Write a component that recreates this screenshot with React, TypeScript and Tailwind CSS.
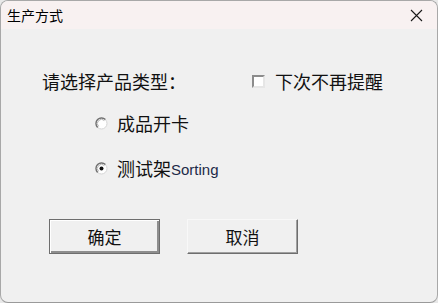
const font = { fontFamily: '"Noto Sans CJK SC", "Noto Sans", sans-serif' }

function Radio({ checked }: { checked?: boolean }) {
  return (
    <svg width="13" height="13" viewBox="0 0 13 13" className="shrink-0">
      <circle cx="6.5" cy="6.5" r="5.5" fill="#ffffff" stroke="#d4d4d4" strokeWidth="1" />
      <path d="M2.6 10.4 A5.5 5.5 0 0 1 10.4 2.6" fill="none" stroke="#707070" strokeWidth="1.4" />
      <path d="M3.6 9.4 A4.1 4.1 0 0 1 9.4 3.6" fill="none" stroke="#b0b0b0" strokeWidth="1" />
      {checked && <circle cx="6.5" cy="6.5" r="2" fill="#111111" />}
    </svg>
  )
}

export default function App() {
  return (
    <div className="h-[303px] w-[438px] bg-[#e8e8e8]" style={font}>
      <div className="flex h-full w-full flex-col overflow-hidden rounded-[8px] border border-[#a8a8a8] border-b-[#9a9a9a] bg-[#f0f0f0]">
        {/* title bar */}
        <div className="flex h-[28px] shrink-0 items-center justify-between bg-[#f8f1f1] pl-[6px] pr-[14px]">
          <span className="text-[14px] leading-none text-black">生产方式</span>
          <svg width="13" height="13" viewBox="0 0 13 13">
            <path d="M1 1 L12 12 M12 1 L1 12" stroke="#1a1a1a" strokeWidth="1.1" />
          </svg>
        </div>

        {/* body */}
        <div className="flex flex-col pt-[40px]">
          <div className="flex h-[24px] items-center pl-[41px]">
            <span className="w-[210px] text-[18px] leading-none text-[#111]">请选择产品类型：</span>
            <span className="h-[13px] w-[13px] border-[2px] border-[#8c8c8c] border-b-[#e6e6e6] border-r-[#e6e6e6] bg-white" />
            <span className="ml-[10px] text-[18px] leading-none text-[#111]">下次不再提醒</span>
          </div>

          <div className="mt-[18px] flex h-[24px] items-center pl-[94px]">
            <Radio />
            <span className="ml-[9px] text-[18px] leading-none text-[#111]">成品开卡</span>
          </div>

          <div className="mt-[21px] flex h-[24px] items-center pl-[94px]">
            <Radio checked />
            <span className="ml-[9px] text-[18px] leading-none text-[#111]">测试架</span>
            <span className="mt-[3px] text-[15px] leading-none text-[#1c2a48]" style={{ fontFamily: '"Liberation Sans", Arial, sans-serif' }}>
              Sorting
            </span>
          </div>

          <div className="mt-[39px] flex gap-[27px] pl-[48px]">
            <button className="flex h-[35px] w-[111px] items-center justify-center border border-[#6e6e6e] bg-[#f0f0f0] text-[17px] text-[#111] shadow-[inset_1px_1px_0_#ffffff,inset_-2px_-2px_0_#8e8e8e]">
              确定
            </button>
            <button className="flex h-[35px] w-[111px] items-center justify-center border border-[#f8f8f8] border-b-[#6e6e6e] border-r-[#6e6e6e] bg-[#f0f0f0] text-[17px] text-[#111] shadow-[inset_-1px_-1px_0_#a0a0a0]">
              取消
            </button>
          </div>
        </div>
      </div>
    </div>
  )
}
